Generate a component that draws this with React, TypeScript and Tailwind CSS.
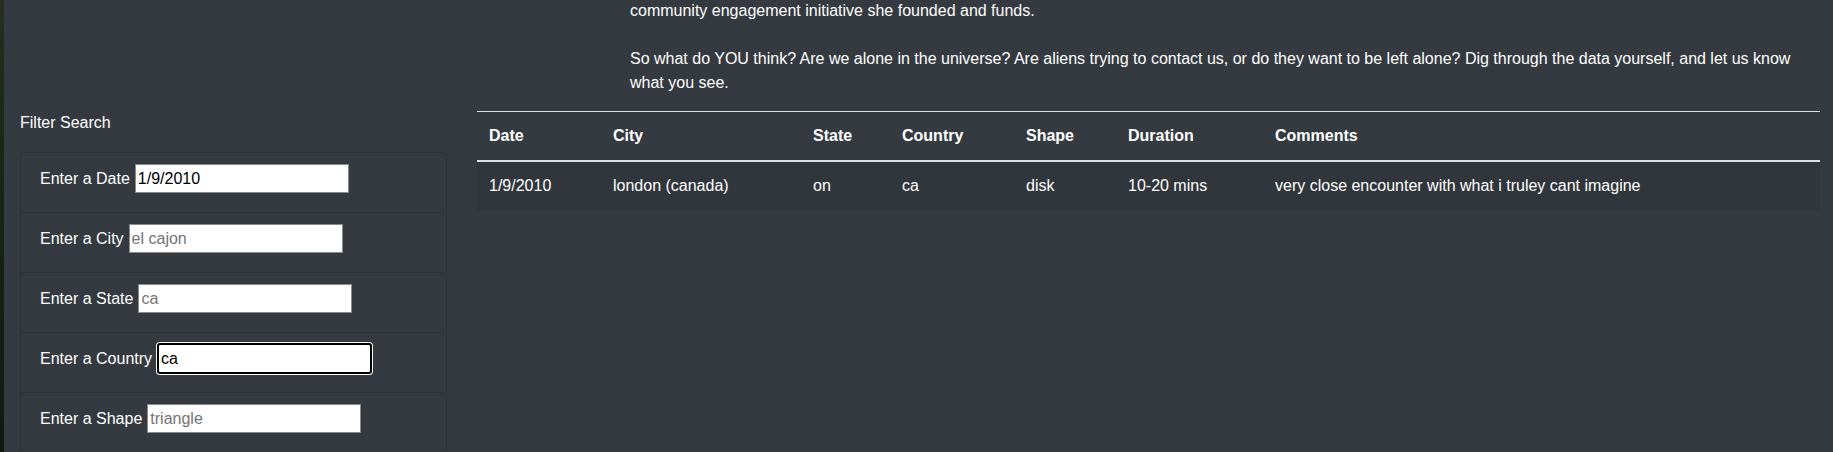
import React from 'react';

const filters = [
    { label: 'Enter a Date', value: '1/9/2010', placeholder: '' },
    { label: 'Enter a City', value: '', placeholder: 'el cajon' },
    { label: 'Enter a State', value: '', placeholder: 'ca' },
    { label: 'Enter a Country', value: 'ca', placeholder: '', focused: true },
    { label: 'Enter a Shape', value: '', placeholder: 'triangle' },
];

const columns = [
    { name: 'Date', width: 'w-[124px]' },
    { name: 'City', width: 'w-[200px]' },
    { name: 'State', width: 'w-[89px]' },
    { name: 'Country', width: 'w-[124px]' },
    { name: 'Shape', width: 'w-[102px]' },
    { name: 'Duration', width: 'w-[147px]' },
    { name: 'Comments', width: '' },
];

const sightings = [
    ['1/9/2010', 'london (canada)', 'on', 'ca', 'disk', '10-20 mins', 'very close encounter with what i truley cant imagine'],
];

export default function App() {
    return (
        <div className="flex h-[452px] w-full overflow-hidden font-['Liberation_Sans',Arial,sans-serif] text-[16px] leading-[24px] text-white">
            {/* background photo peeking out on the left */}
            <div className="w-[4px] shrink-0 bg-[linear-gradient(180deg,#2a2e22_0%,#1d2a17_20%,#162214_55%,#121a10_100%)]" />

            <div className="flex-1 bg-[#343a40]">
                <div className="ml-[626px] w-[1175px] -mt-px">
                    <p className="mb-[24px]">community engagement initiative she founded and funds.</p>
                    <p className="mb-[16px]">
                        So what do YOU think? Are we alone in the universe? Are aliens trying to contact us, or do they want to be left alone? Dig through the data yourself, and let us know what you see.
                    </p>
                </div>

                <div className="flex items-start gap-[30px] pl-[16px]">
                    <aside className="w-[427px] shrink-0">
                        <h5 className="mb-[17px]">Filter Search</h5>
                        <ul className="rounded-[4px] border border-[#2e3338]">
                            {filters.map((f, i) => (
                                <li
                                    key={f.label}
                                    className={`px-[19px] pt-[11px] ${i > 0 ? 'h-[60px] border-t border-[#2e3338]' : 'h-[59px]'}`}
                                >
                                    <div className="flex h-[29px] items-center gap-[5px]">
                                        <label>{f.label}</label>
                                        <input
                                            type="text"
                                            defaultValue={f.value}
                                            placeholder={f.placeholder}
                                            className={
                                                f.focused
                                                    ? 'h-[31px] w-[215px] rounded-[3px] border-2 border-black bg-white px-[2px] text-black shadow-[0_0_0_1px_#ffffff] outline-none'
                                                    : 'h-[29px] w-[214px] border border-[#8a8a8a] bg-white px-[2px] text-black placeholder:text-[#757575] outline-none'
                                            }
                                        />
                                    </div>
                                </li>
                            ))}
                        </ul>
                    </aside>

                    <table className="w-[1343px] border-collapse text-left">
                        <thead>
                            <tr>
                                {columns.map((c) => (
                                    <th
                                        key={c.name}
                                        className={`${c.width} border-t border-b-2 border-[#dee2e6] p-[12px] font-bold`}
                                    >
                                        {c.name}
                                    </th>
                                ))}
                            </tr>
                        </thead>
                        <tbody>
                            {sightings.map((row, r) => (
                                <tr key={r} className="bg-[#31363c]">
                                    {row.map((cell, i) => (
                                        <td key={i} className="p-[12px]">{cell}</td>
                                    ))}
                                </tr>
                            ))}
                        </tbody>
                    </table>
                </div>
            </div>
        </div>
    );
}
